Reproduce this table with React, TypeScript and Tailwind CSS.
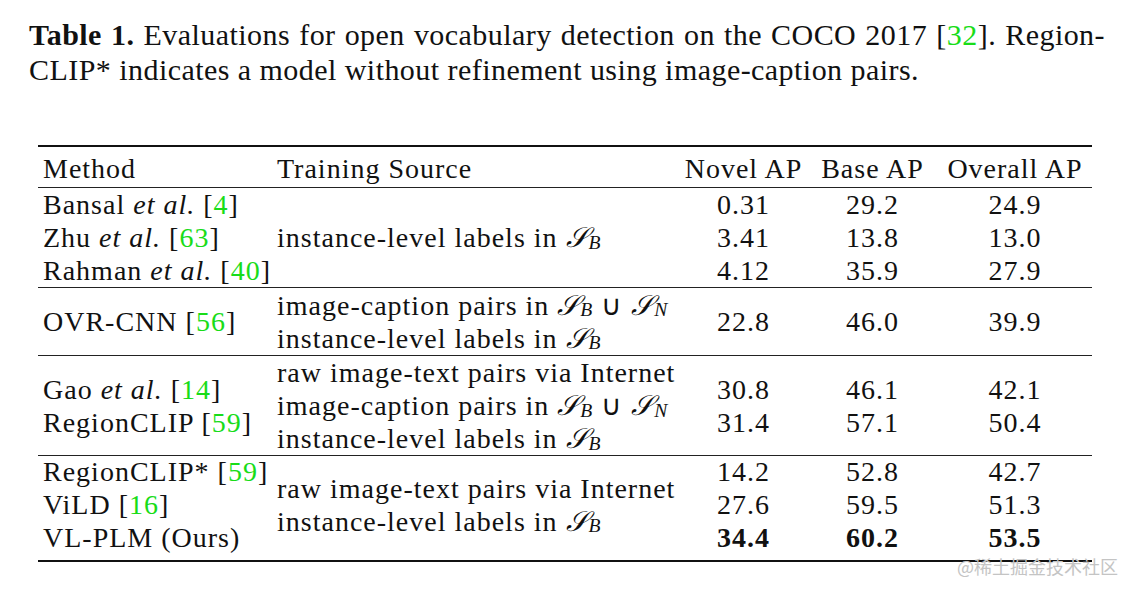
import React from "react";

const G = ({ children }: { children: React.ReactNode }) => (
  <span className="text-[#19dc19]">{children}</span>
);

const Ref = ({ n }: { n: string }) => (
  <span>
    [<G>{n}</G>]
  </span>
);

const S = ({ sub }: { sub: string }) => (
  <span className="whitespace-nowrap">
    <span className="italic">𝒮</span>
    <sub className="italic text-[0.7em] relative top-[0.1em]">{sub}</sub>
  </span>
);

const SB = () => <S sub="B" />;
const SBN = () => (
  <span className="whitespace-nowrap">
    <SB /> ∪ <S sub="N" />
  </span>
);

const Etal = () => <span className="italic">et al.</span>;

const Lines = ({ items, align = "left" }: { items: React.ReactNode[]; align?: "left" | "center" }) => (
  <div
    className={
      align === "center"
        ? "flex flex-col justify-center items-center px-[5px]"
        : "flex flex-col justify-center items-start px-[5px]"
    }
  >
    {items.map((it, i) => (
      <div key={i} className="h-[33px] leading-[33px] whitespace-nowrap">
        {it}
      </div>
    ))}
  </div>
);

const cols = "grid grid-cols-[234px_408px_127px_131px_154px]";

export default function App() {
  return (
    <div className="relative w-[1136px] h-[592px] bg-white text-[#111] overflow-hidden font-['Liberation_Serif',serif]">
      <div className="pt-[17px] pl-[29px] w-[1105px] text-[30px] leading-[35px] tracking-[0.45px]">
        <div className="whitespace-nowrap text-justify [text-align-last:justify]">
          <span className="font-bold">Table 1.</span> Evaluations for open vocabulary detection on the COCO 2017{" "}
          <Ref n="32" />. Region-
        </div>
        <div className="whitespace-nowrap">CLIP* indicates a model without refinement using image-caption pairs.</div>
      </div>

      <div className="mt-[58px] ml-[38px] w-[1054px] text-[28px] tracking-[1px]">
        <div className="h-[2px] bg-[#111]" />
        <div className={`${cols} h-[40px] items-center pt-[2px]`}>
          <Lines items={["Method"]} />
          <Lines items={["Training Source"]} />
          <Lines items={["Novel AP"]} align="center" />
          <Lines items={["Base AP"]} align="center" />
          <Lines items={["Overall AP"]} align="center" />
        </div>
        <div className="h-[1px] bg-[#222]" />

        <div className={cols}>
          <Lines
            items={[
              <>Bansal <Etal /> <Ref n="4" /></>,
              <>Zhu <Etal /> <Ref n="63" /></>,
              <>Rahman <Etal /> <Ref n="40" /></>,
            ]}
          />
          <Lines items={[<>instance-level labels in <SB /></>]} />
          <Lines items={["0.31", "3.41", "4.12"]} align="center" />
          <Lines items={["29.2", "13.8", "35.9"]} align="center" />
          <Lines items={["24.9", "13.0", "27.9"]} align="center" />
        </div>
        <div className="h-[1px] bg-[#222]" />

        <div className={`${cols} h-[67px]`}>
          <Lines items={[<>OVR-CNN <Ref n="56" /></>]} />
          <Lines
            items={[
              <>image-caption pairs in <SBN /></>,
              <>instance-level labels in <SB /></>,
            ]}
          />
          <Lines items={["22.8"]} align="center" />
          <Lines items={["46.0"]} align="center" />
          <Lines items={["39.9"]} align="center" />
        </div>
        <div className="h-[1px] bg-[#222]" />

        <div className={cols}>
          <Lines
            items={[
              <>Gao <Etal /> <Ref n="14" /></>,
              <>RegionCLIP <Ref n="59" /></>,
            ]}
          />
          <Lines
            items={[
              "raw image-text pairs via Internet",
              <>image-caption pairs in <SBN /></>,
              <>instance-level labels in <SB /></>,
            ]}
          />
          <Lines items={["30.8", "31.4"]} align="center" />
          <Lines items={["46.1", "57.1"]} align="center" />
          <Lines items={["42.1", "50.4"]} align="center" />
        </div>
        <div className="h-[1px] bg-[#222]" />

        <div className={`${cols} pb-[6px] -mt-[1px]`}>
          <Lines
            items={[
              <>RegionCLIP* <Ref n="59" /></>,
              <>ViLD <Ref n="16" /></>,
              "VL-PLM (Ours)",
            ]}
          />
          <Lines
            items={[
              "raw image-text pairs via Internet",
              <>instance-level labels in <SB /></>,
            ]}
          />
          <Lines items={["14.2", "27.6", <span className="font-bold">34.4</span>]} align="center" />
          <Lines items={["52.8", "59.5", <span className="font-bold">60.2</span>]} align="center" />
          <Lines items={["42.7", "51.3", <span className="font-bold">53.5</span>]} align="center" />
        </div>
        <div className="h-[2px] bg-[#111]" />
      </div>

      <div className="absolute left-[957px] top-[553px] text-[18px] leading-[26px] text-[#c4c4c4] font-['Noto_Sans_CJK_SC',sans-serif]">
        @稀土掘金技术社区
      </div>
    </div>
  );
}
